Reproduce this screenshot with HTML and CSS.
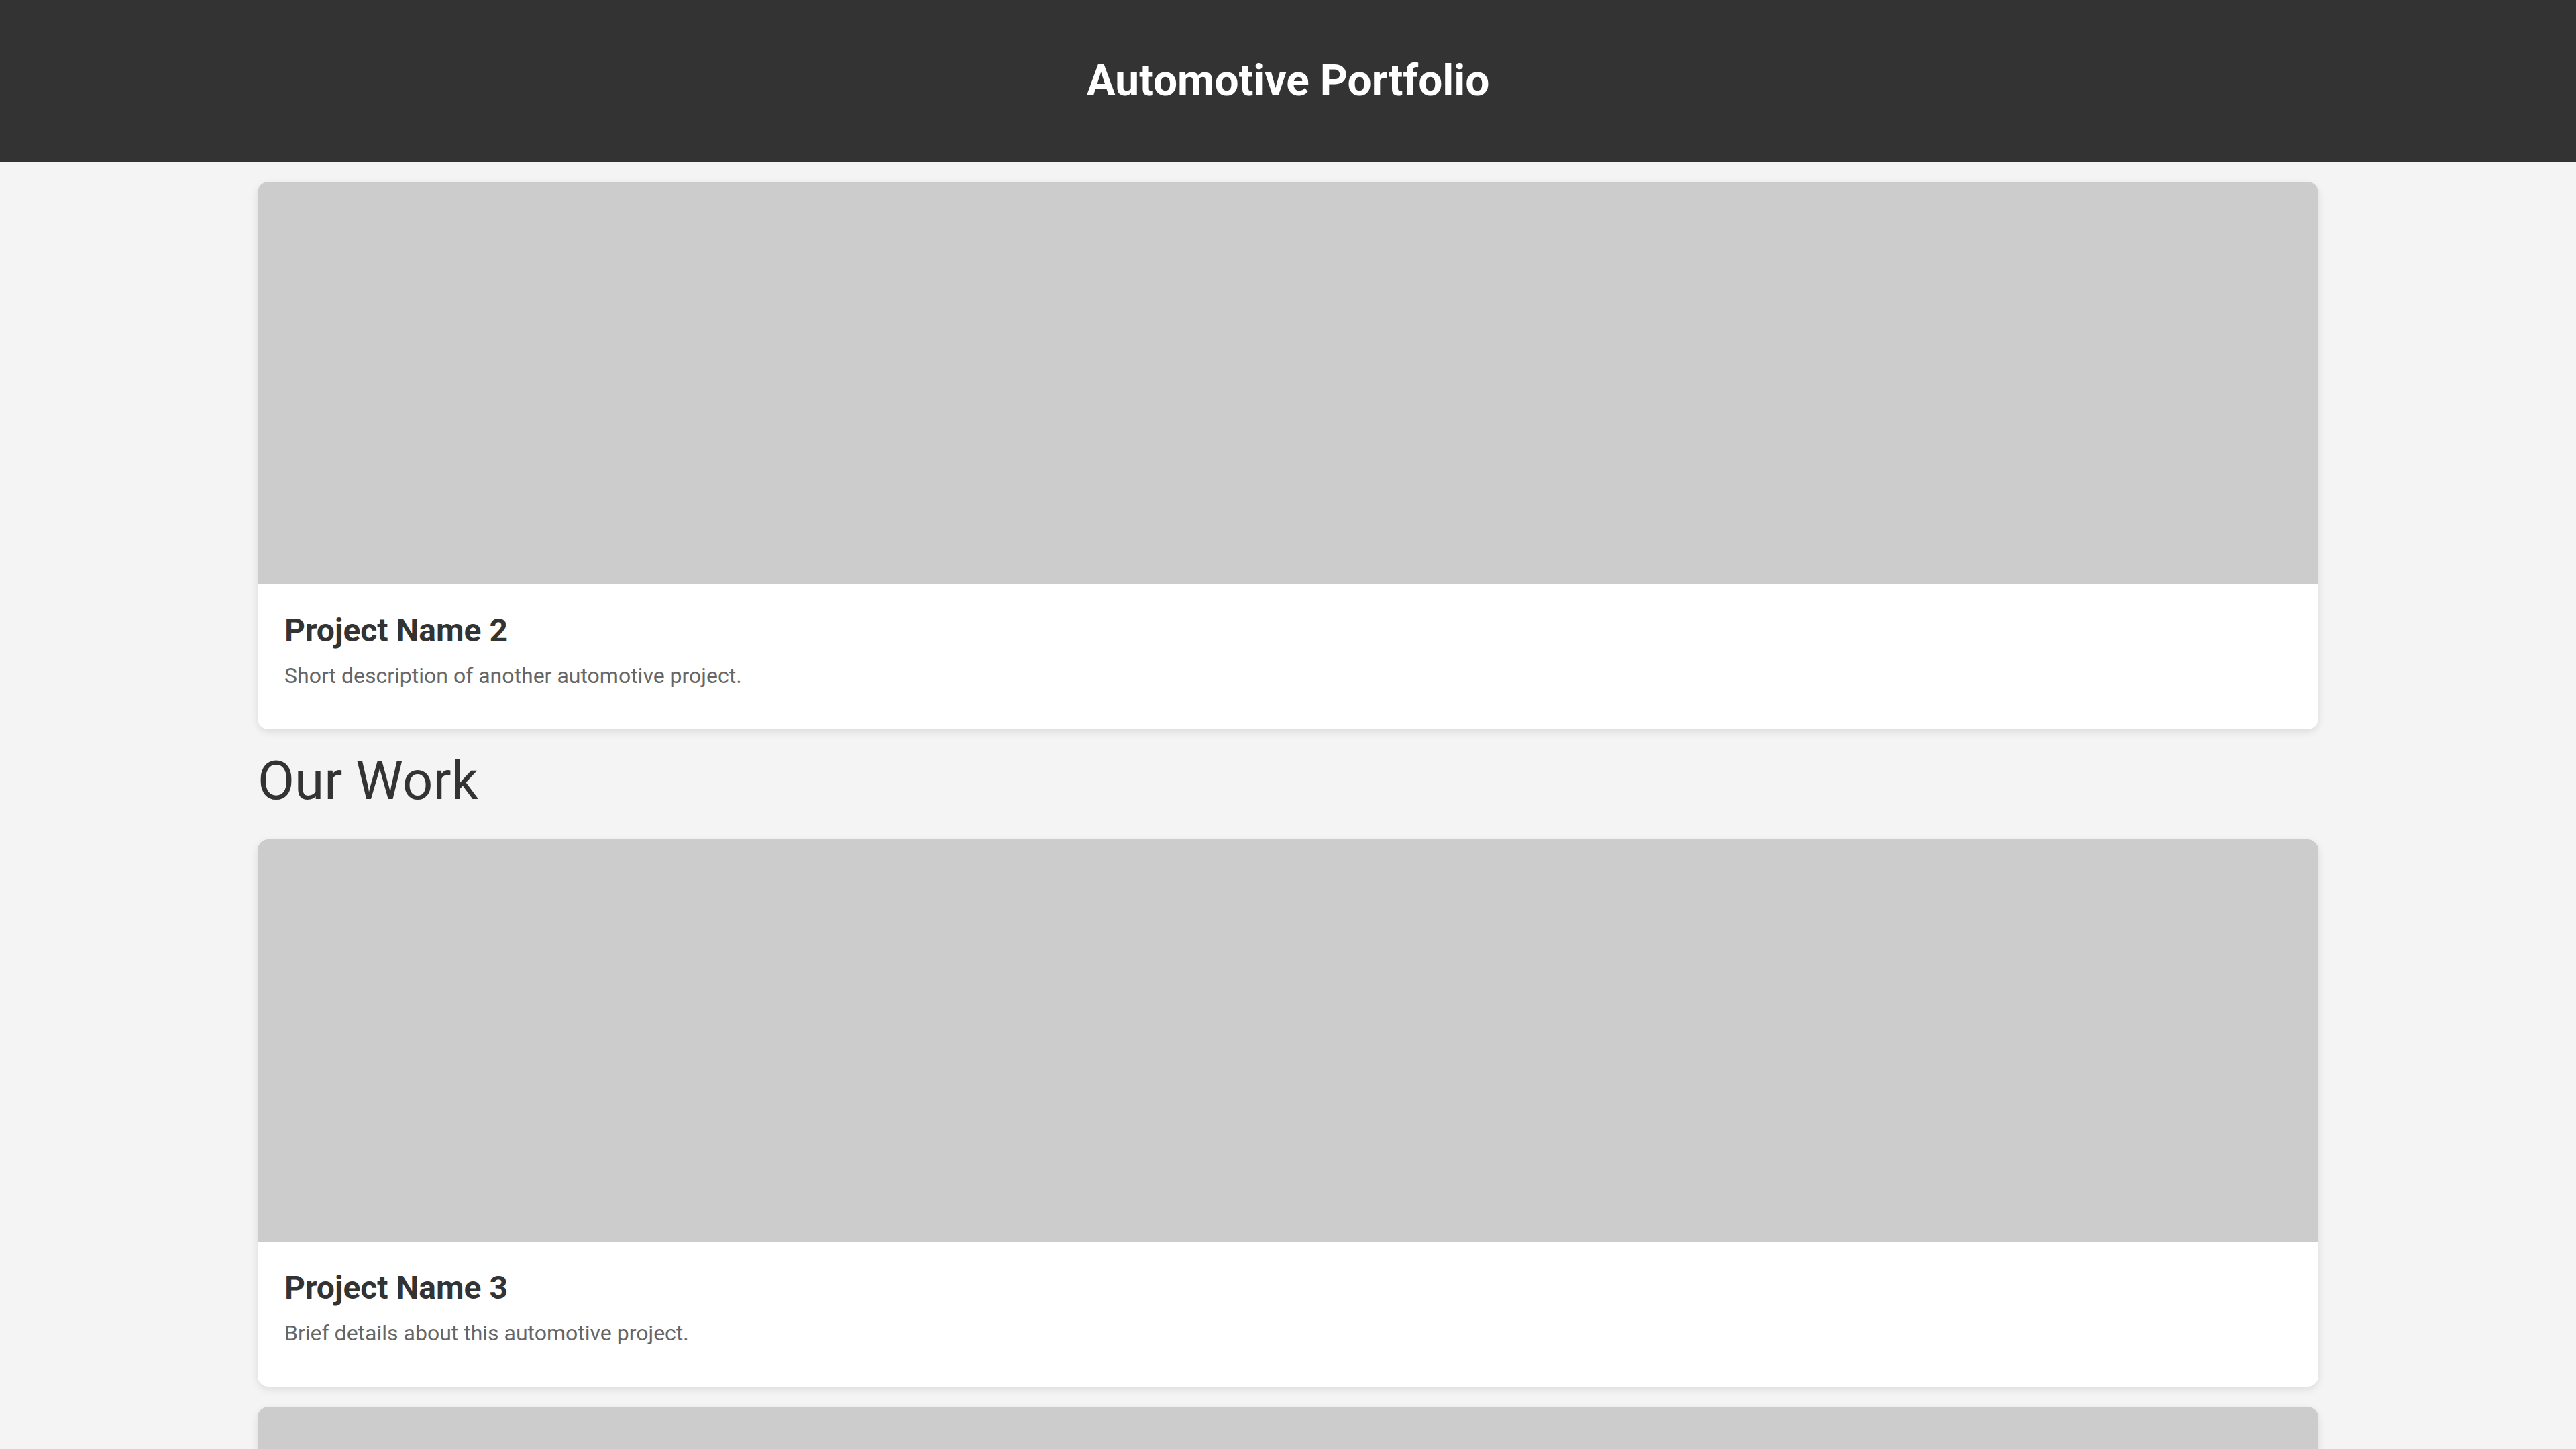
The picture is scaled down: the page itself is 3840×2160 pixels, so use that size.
FILE: index.html
```html
<!DOCTYPE html>
<html lang="en">
<head>
<meta charset="utf-8">
<title>Automotive Portfolio</title>
<link rel="stylesheet" href="styles.css">
</head>
<body>
<header class="site-header">
  <h1 class="site-title">Automotive Portfolio</h1>
</header>
<main class="container">
  <article class="card">
    <div class="card-image"></div>
    <div class="card-body">
      <h3 class="card-title">Project Name 2</h3>
      <p class="card-text">Short description of another automotive project.</p>
    </div>
  </article>
  <h2 class="section-title">Our Work</h2>
  <article class="card">
    <div class="card-image"></div>
    <div class="card-body">
      <h3 class="card-title">Project Name 3</h3>
      <p class="card-text">Brief details about this automotive project.</p>
    </div>
  </article>
  <article class="card">
    <div class="card-image"></div>
  </article>
</main>
</body>
</html>
```

FILE: styles.css
```css
html, body {
  margin: 0;
  padding: 0;
}
body {
  background: #f4f4f4;
  font-family: Roboto, "Liberation Sans", Arial, sans-serif;
  color: #333;
}
.site-header {
  background: #333;
  color: #fff;
  padding: 40px 0;
  text-align: center;
}
.site-title {
  margin: 42.88px 0;
  font-size: 64px;
  font-weight: 700;
  line-height: normal;
}
.container {
  width: 80%;
  margin: 30px auto 0;
}
.card {
  background: #fff;
  border-radius: 16px;
  overflow: hidden;
  box-shadow: 0 4px 12px rgba(0, 0, 0, 0.1);
  margin-bottom: 30px;
}
.card-image {
  height: 600px;
  background: #ccc;
}
.card-body {
  padding: 40px;
}
.card-title {
  margin: 0 0 20px;
  font-size: 48px;
  font-weight: 700;
  color: #333;
  line-height: normal;
}
.card-text {
  margin: 0 0 21px;
  font-size: 32px;
  color: #666;
  line-height: normal;
}
.section-title {
  margin: 0 0 40px;
  font-size: 80px;
  font-weight: 400;
  line-height: 94px;
  color: #333;
}
```
